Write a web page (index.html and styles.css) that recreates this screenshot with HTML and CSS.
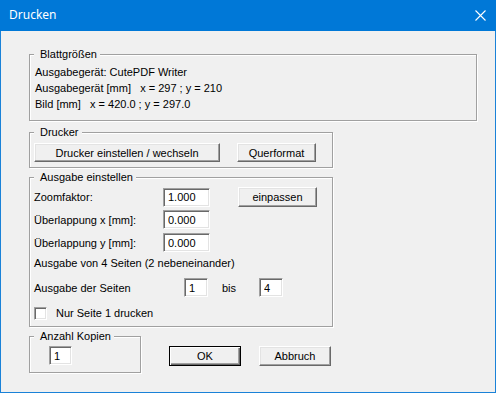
FILE: index.html
```html
<!DOCTYPE html>
<html lang="de">
<head>
<meta charset="utf-8">
<title>Drucken</title>
<link rel="stylesheet" href="styles.css">
</head>
<body>
<div class="window">
  <div class="titlebar">
    <span class="title">Drucken</span>
    <svg class="close" width="11" height="11" viewBox="0 0 11 11"><path d="M0.5 0.5 L10.5 10.5 M10.5 0.5 L0.5 10.5" stroke="#fff" stroke-width="1.1" fill="none"/></svg>
  </div>
  <div class="content">
    <div class="group g-blatt">
      <span class="legend">Blattgrößen</span>
      <div class="line">Ausgabegerät: CutePDF Writer</div>
      <div class="line">Ausgabegerät [mm]&nbsp;&nbsp;&nbsp;x = 297 ; y = 210</div>
      <div class="line">Bild [mm]&nbsp;&nbsp;&nbsp;x = 420.0 ; y = 297.0</div>
    </div>

    <div class="group g-drucker">
      <span class="legend">Drucker</span>
      <div class="btnrow">
        <button class="btn btn-wide">Drucker einstellen / wechseln</button>
        <button class="btn btn-std">Querformat</button>
      </div>
    </div>

    <div class="group g-ausgabe">
      <span class="legend">Ausgabe einstellen</span>
      <div class="row row-first">
        <span class="label">Zoomfaktor:</span>
        <input class="field field-num" value="1.000" readonly>
        <button class="btn btn-std btn-fit">einpassen</button>
      </div>
      <div class="row">
        <span class="label">Überlappung x [mm]:</span>
        <input class="field field-num" value="0.000" readonly>
      </div>
      <div class="row">
        <span class="label">Überlappung y [mm]:</span>
        <input class="field field-num" value="0.000" readonly>
      </div>
      <div class="info">Ausgabe von 4 Seiten (2 nebeneinander)</div>
      <div class="row row-pages">
        <span class="label label-pages">Ausgabe der Seiten</span>
        <input class="field field-small" value="1" readonly>
        <span class="bis">bis</span>
        <input class="field field-small" value="4" readonly>
      </div>
      <label class="check">
        <span class="box"></span>
        <span>Nur Seite 1 drucken</span>
      </label>
    </div>

    <div class="bottom">
      <div class="group g-kopien">
        <span class="legend">Anzahl Kopien</span>
        <input class="field field-small" value="1" readonly>
      </div>
      <button class="btn btn-dlg btn-default">OK</button>
      <button class="btn btn-dlg">Abbruch</button>
    </div>
  </div>
</div>
</body>
</html>
```

FILE: styles.css
```css
* { box-sizing: border-box; }

html, body {
  margin: 0;
  padding: 0;
  background: #f0f0f0;
}

body {
  font-family: "Liberation Sans", Arial, sans-serif;
  font-size: 11px;
  color: #000;
}

.window {
  width: 496px;
  height: 393px;
  background: #f0f0f0;
  border: 1px solid #1a82d8;
  border-top: 0;
}

.titlebar {
  height: 31px;
  margin: 0 -1px;
  background: #0078d7;
  display: flex;
  align-items: center;
  justify-content: space-between;
  padding: 0 10px 0 9px;
  color: #fff;
}

.title {
  font-family: "Noto Sans", "Open Sans", sans-serif;
  font-size: 12px;
  line-height: 16px;
  margin-top: -1px;
}

.close {
  display: block;
  margin-top: -1px;
}

.content {
  padding: 23px 18px 0 28px;
}

.group {
  position: relative;
  border: 1px solid #a0a0a0;
  box-shadow: inset 1px 1px 0 #fff, 1px 1px 0 #fff;
}

.legend {
  position: absolute;
  top: -9px;
  left: 4px;
  padding: 0 3px 0 6px;
  background: #f0f0f0;
  line-height: 16px;
  white-space: nowrap;
}

.g-blatt {
  height: 67px;
  padding: 9px 0 0 5px;
}

.line {
  line-height: 16px;
  white-space: nowrap;
}

.g-drucker {
  width: 304px;
  height: 36px;
  margin-top: 11px;
  padding: 10px 0 0 4px;
}

.btnrow {
  display: flex;
  gap: 17px;
}

.btn {
  font: inherit;
  color: #000;
  background: #f0f0f0;
  height: 19px;
  padding: 0;
  border: 1px solid;
  border-color: #fff #696969 #696969 #fff;
  box-shadow: inset -1px -1px 0 #a0a0a0, inset 1px 1px 0 #e3e3e3;
  line-height: 16px;
}

.btn-wide { width: 186px; }
.btn-std { width: 79px; }

.g-ausgabe {
  width: 304px;
  height: 150px;
  margin-top: 9px;
  padding: 9px 0 0 4px;
}

.row {
  display: flex;
  align-items: center;
  height: 19px;
  margin-top: 4px;
}

.row-first {
  margin-top: 0;
  height: 20px;
}

.row-first + .row { margin-top: 3px; }

.label {
  width: 129px;
  white-space: nowrap;
}

.label-pages { width: 150px; }

.field {
  font: inherit;
  color: #000;
  background: #fff;
  height: 19px;
  padding: 0 0 0 4px;
  border: 1px solid;
  border-color: #a0a0a0 #fff #fff #a0a0a0;
  box-shadow: inset 1px 1px 0 #696969, inset -1px -1px 0 #e3e3e3;
  outline: none;
  line-height: 16px;
}

.field-num { width: 47px; }
.field-small { width: 24px; }

.btn-fit {
  height: 20px;
  margin-left: 28px;
}

.info {
  line-height: 16px;
  margin-top: 3px;
  white-space: nowrap;
}

.row-pages {
  margin-top: 7px;
}

.bis {
  width: 51px;
  padding-left: 14px;
}

.check {
  display: flex;
  align-items: center;
  gap: 9px;
  margin-top: 10px;
  line-height: 13px;
}

.box {
  width: 13px;
  height: 13px;
  background: #fff;
  border: 1px solid;
  border-color: #a0a0a0 #fff #fff #a0a0a0;
  box-shadow: inset 1px 1px 0 #696969, inset -1px -1px 0 #e3e3e3;
}

.bottom {
  display: flex;
  align-items: flex-start;
  margin-top: 9px;
}

.g-kopien {
  width: 112px;
  height: 37px;
  padding: 9px 0 0 19px;
}

.g-kopien .field { width: 23px; }

.btn-dlg {
  width: 72px;
  height: 20px;
  margin-top: 10px;
  margin-left: 18px;
}

.btn-default {
  margin-left: 28px;
  border: 1px solid #000;
  box-shadow: inset 1px 1px 0 #fff, inset -1px -1px 0 #696969, inset -2px -2px 0 #a0a0a0;
}
```
